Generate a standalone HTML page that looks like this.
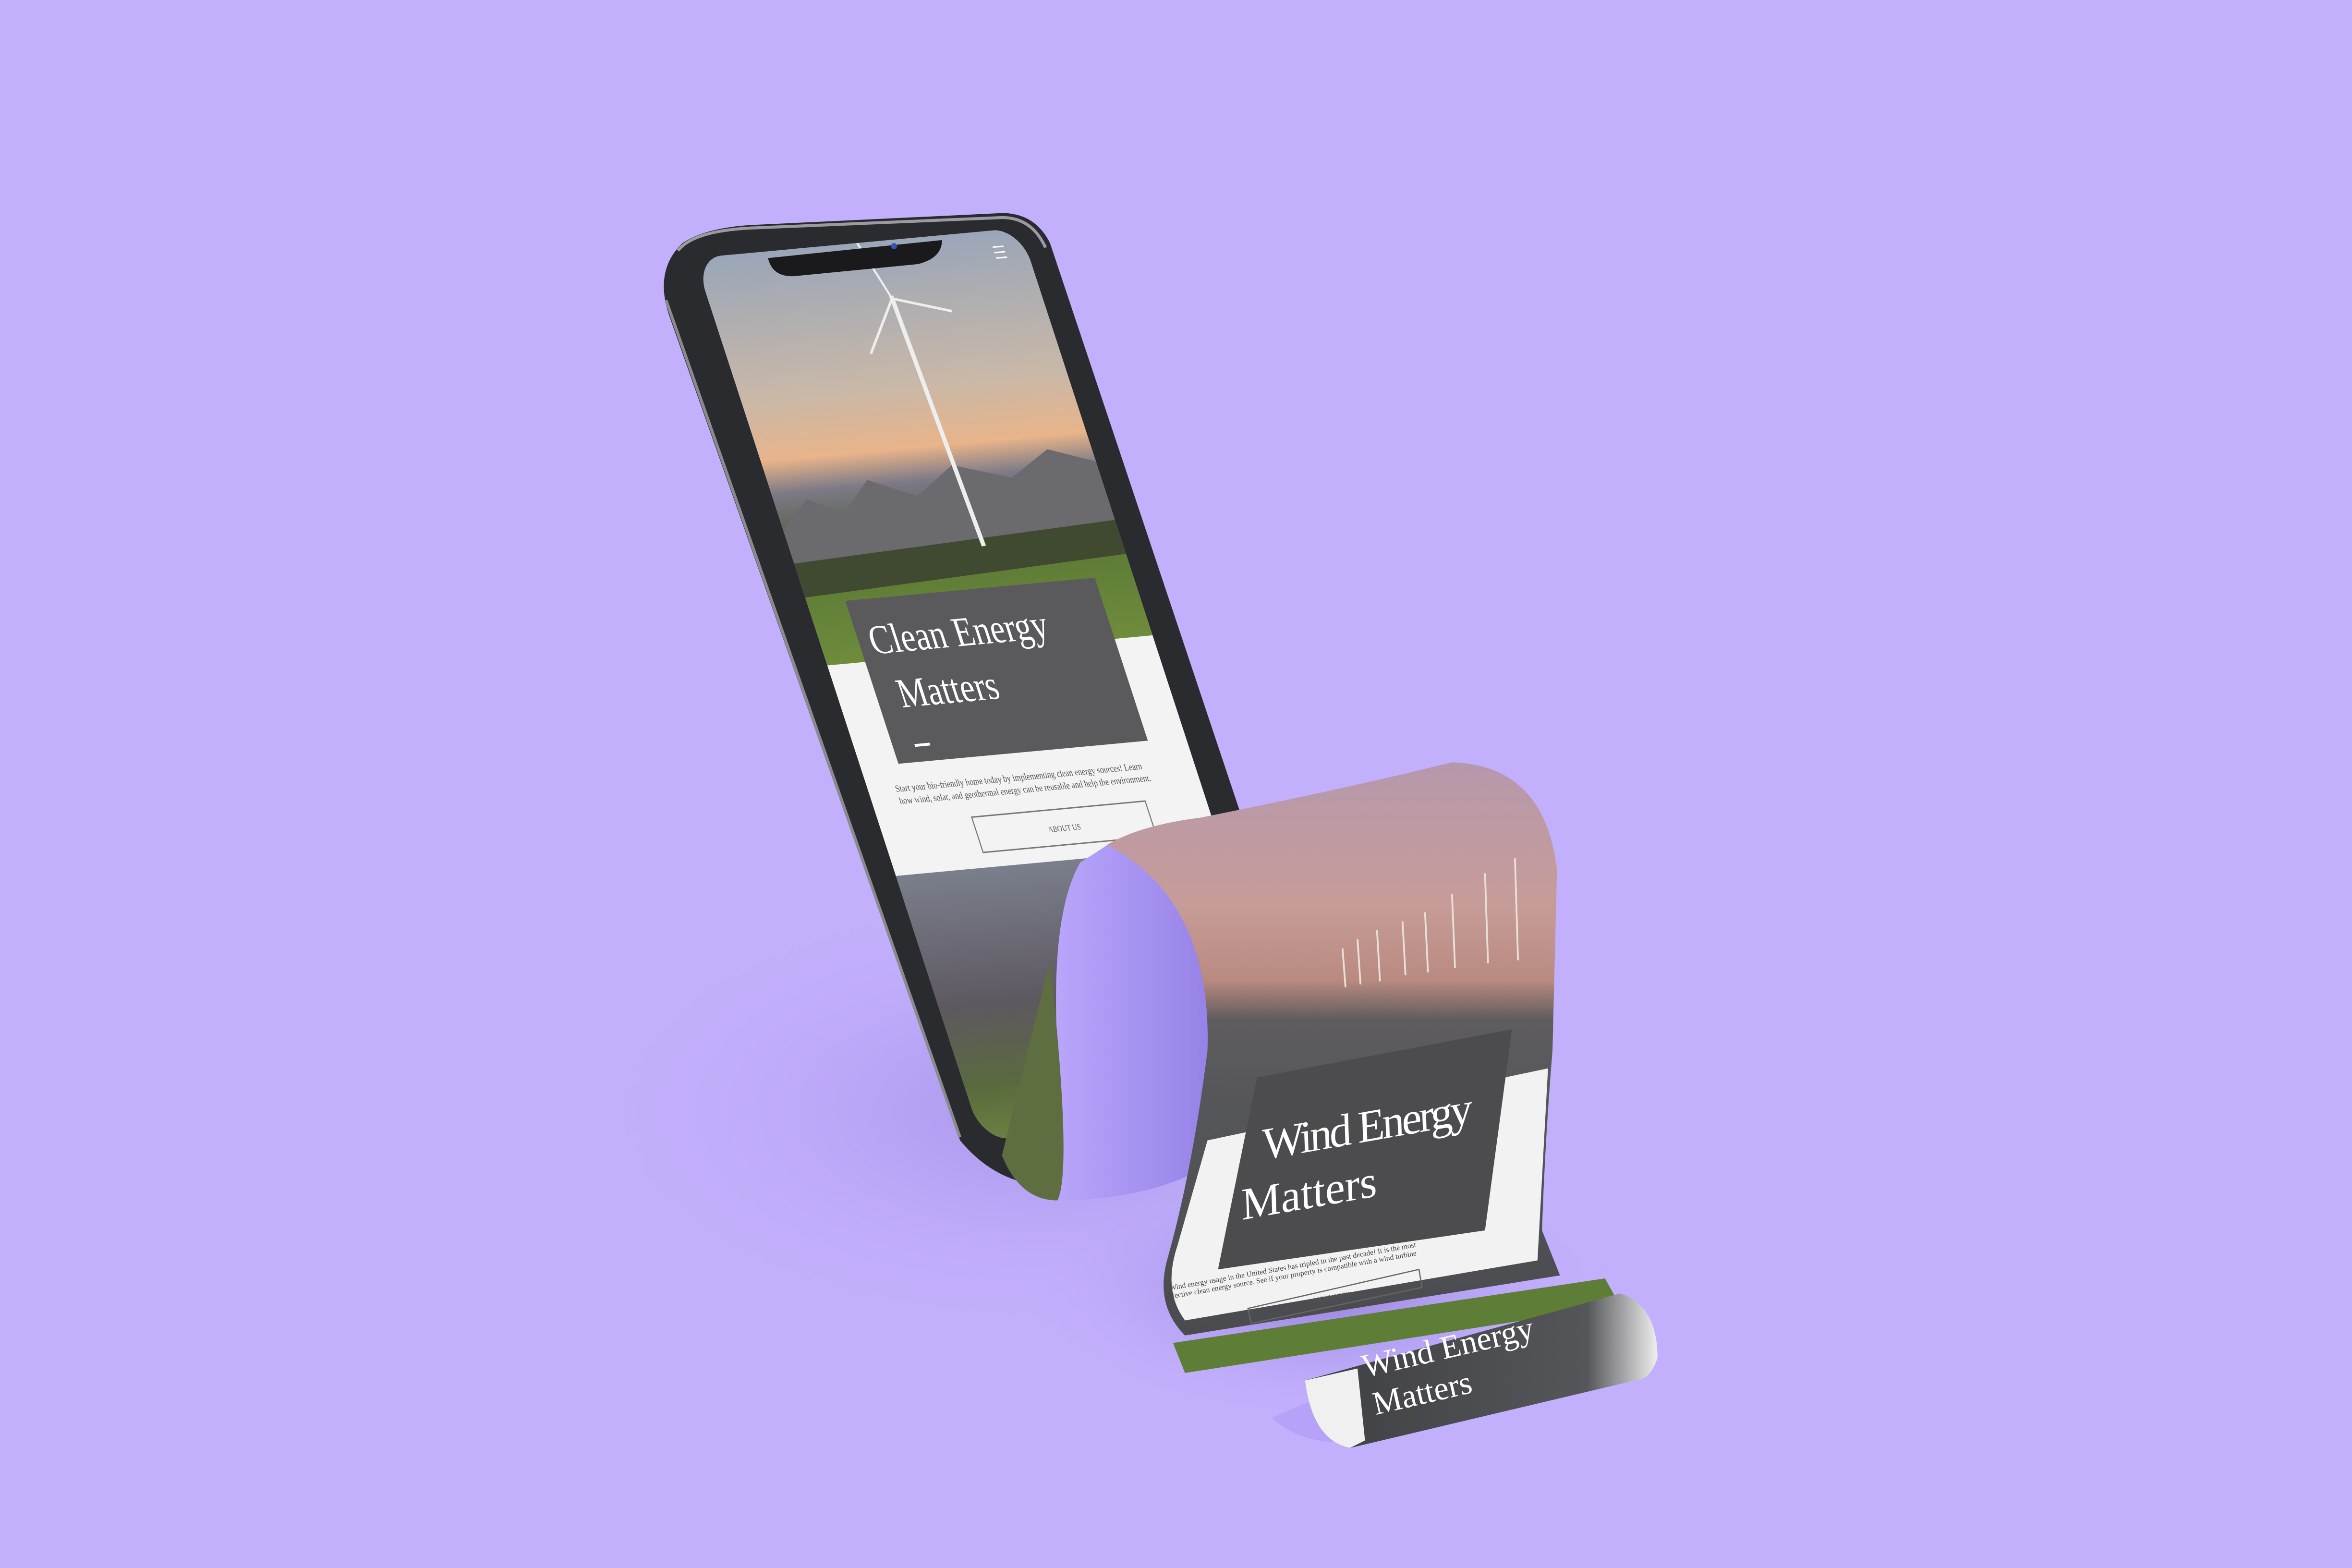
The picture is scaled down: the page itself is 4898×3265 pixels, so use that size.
<!DOCTYPE html>
<html><head><meta charset="utf-8"><style>
html,body{margin:0;padding:0;background:#c3b0fd;}
svg{display:block}
</style></head><body>
<svg width="4898" height="3265" viewBox="0 0 1568 1045" preserveAspectRatio="none" xmlns="http://www.w3.org/2000/svg" font-family="Liberation Serif, serif">
<defs>
<radialGradient id="bgsh" cx="0.5" cy="0.5" r="0.5">
<stop offset="0" stop-color="#7d68c8" stop-opacity="0.75"/><stop offset="1" stop-color="#c3b0fd" stop-opacity="0"/></radialGradient>
<linearGradient id="sky" x1="0" y1="0" x2="0" y2="1">
<stop offset="0" stop-color="#9aa6b8"/><stop offset="0.35" stop-color="#c9b8a8"/><stop offset="0.5" stop-color="#e8b48a"/><stop offset="0.58" stop-color="#7c7a86"/><stop offset="0.72" stop-color="#4f5a3e"/><stop offset="0.8" stop-color="#5f7c38"/><stop offset="1" stop-color="#6e8c3a"/></linearGradient>
<linearGradient id="trees" x1="0" y1="0" x2="0" y2="1">
<stop offset="0" stop-color="#7a7f8c"/><stop offset="0.5" stop-color="#5e5860"/><stop offset="0.8" stop-color="#5a6a3e"/><stop offset="1" stop-color="#6a8040"/></linearGradient>
<linearGradient id="paper" x1="0" y1="0" x2="0" y2="1">
<stop offset="0" stop-color="#b698ac"/><stop offset="0.25" stop-color="#c79c98"/><stop offset="0.38" stop-color="#b98a80"/><stop offset="0.45" stop-color="#5f5c5e"/><stop offset="0.6" stop-color="#55565a"/><stop offset="1" stop-color="#4a4b4e"/></linearGradient>
<linearGradient id="curlin" x1="0" y1="0" x2="1" y2="0">
<stop offset="0" stop-color="#b9a6fb"/><stop offset="1" stop-color="#9581e6"/></linearGradient>
<linearGradient id="roll" x1="0" y1="0" x2="1" y2="0">
<stop offset="0" stop-color="#3e3f42"/><stop offset="0.8" stop-color="#555659"/><stop offset="1" stop-color="#eeeeee"/></linearGradient>
</defs>
<rect width="1568" height="1045" fill="#c3b0fd"/>
<ellipse cx="700" cy="740" rx="330" ry="160" fill="url(#bgsh)" opacity="0.5"/>
<ellipse cx="880" cy="860" rx="200" ry="90" fill="url(#bgsh)" opacity="0.9"/>

<!-- phone body -->
<path d="M455,162 Q470,152 500,150 L668,142 Q690,142 700,162 L828,545 L720,600 L700,790 Q665,790 640,760 L446,210 Q436,180 455,162 Z" fill="#2a2b2e"/>
<path d="M452,167 Q462,154 500,152 L668,145 Q688,145 697,165" fill="none" stroke="#9a9aa0" stroke-width="2"/>
<path d="M444,200 L640,758" stroke="#8a8a90" stroke-width="2" fill="none"/>

<!-- screen -->
<g transform="matrix(0.723,-0.067,0.295,0.905,463,172)">
<clipPath id="sc"><rect x="0" y="0" width="300" height="650" rx="25"/></clipPath>
<g clip-path="url(#sc)">
<rect x="0" y="0" width="300" height="650" fill="#f3f3f3"/>
<rect x="0" y="0" width="300" height="300" fill="url(#sky)"/>
<path d="M0,200 L30,180 L60,192 L90,170 L130,185 L170,165 L220,178 L260,160 L300,172 L300,220 L0,230Z" fill="#6b6a6e"/>
<path d="M0,225 L300,215 L300,240 L0,250Z" fill="#3f4a30"/>
<line x1="165" y1="40" x2="175" y2="225" stroke="#eee" stroke-width="4"/>
<line x1="165" y1="42" x2="150" y2="0" stroke="#eee" stroke-width="2"/>
<line x1="165" y1="42" x2="215" y2="55" stroke="#eee" stroke-width="2"/>
<line x1="165" y1="42" x2="130" y2="80" stroke="#eee" stroke-width="2"/>
<rect x="0" y="455" width="300" height="195" fill="url(#trees)"/>
<rect x="35" y="255" width="230" height="120" fill="#5a5a5c"/>
<text x="45" y="295" font-size="30" fill="#fff">Clean Energy</text>
<text x="55" y="335" font-size="30" fill="#fff">Matters</text>
<rect x="55" y="362" width="14" height="2" fill="#fff"/>
<text x="25" y="395" font-size="7" fill="#555">Start your bio-friendly home today by implementing clean energy sources! Learn</text>
<text x="25" y="404" font-size="7" fill="#555">how wind, solar, and geothermal energy can be reusable and help the environment.</text>
<rect x="85" y="418" width="160" height="26" fill="none" stroke="#777" stroke-width="1"/>
<text x="150" y="434" font-size="6" fill="#555">ABOUT US</text>
<path d="M270,12 h10 M270,16 h10 M270,20 h10" stroke="#fff" stroke-width="1"/>
</g>
</g>
<!-- notch -->
<path d="M512,172 L628,160 Q628,172 612,176 L530,184 Q515,185 512,172Z" fill="#1a1a1c"/>
<circle cx="596" cy="164" r="2" fill="#3355aa"/>

<!-- curl inside -->
<path d="M720,575 Q700,610 705,700 Q712,790 705,800 Q760,800 800,780 L810,640 Q800,580 740,562 Z" fill="url(#curlin)"/>
<path d="M705,800 Q680,800 668,770 L700,640 Q715,780 705,800Z" fill="#5f6e40"/>

<!-- main paper -->
<path d="M738,563 Q760,550 800,545 Q900,525 968,508 Q1030,510 1038,580 L1035,700 Q1030,760 1028,820 L1040,850 L790,890 Q770,870 778,840 Q795,780 805,700 Q808,600 738,563 Z" fill="url(#paper)"/>
<path d="M805,760 L1032,712 L1025,840 L790,880 Q775,860 785,830Z" fill="#f2f2f2"/>
<path d="M838,718 L1008,686 L990,820 L812,846Z" fill="#4c4c4f"/>
<g stroke="#e8e0d8" stroke-width="1.2">
<line x1="1010" y1="572" x2="1012" y2="640"/><line x1="990" y1="582" x2="992" y2="642"/><line x1="968" y1="596" x2="970" y2="645"/><line x1="950" y1="608" x2="952" y2="648"/><line x1="935" y1="614" x2="937" y2="650"/><line x1="918" y1="620" x2="920" y2="654"/><line x1="905" y1="626" x2="907" y2="656"/><line x1="895" y1="632" x2="897" y2="658"/>
</g>
<text transform="translate(842,773) rotate(-10) skewX(-8)" font-size="30" fill="#fff" textLength="142">Wind Energy</text>
<text transform="translate(828,813) rotate(-10) skewX(-8)" font-size="30" fill="#fff">Matters</text>
<text transform="translate(780,860) rotate(-10)" font-size="5" fill="#444">Wind energy usage in the United States has tripled in the past decade! It is the most</text>
<text transform="translate(778,866) rotate(-10)" font-size="5" fill="#444">effective clean energy source. See if your property is compatible with a wind turbine</text>
<path d="M832,872 L946,846 L948,858 L834,882Z" fill="none" stroke="#666" stroke-width="0.8"/>
<text transform="translate(876,868) rotate(-10)" font-size="4.5" fill="#555">MORE INFO</text>
<path d="M782,895 L1070,852 L1080,870 L790,915Z" fill="#5e7e38"/>

<!-- lower roll -->
<path d="M848,945 Q880,930 900,925 L905,960 Q870,965 848,945Z" fill="#b6a2f8"/>
<path d="M870,920 L1080,862 Q1105,870 1105,905 Q1100,920 1090,920 L900,965 Q875,960 870,920Z" fill="url(#roll)"/>
<path d="M870,920 L905,912 L910,960 L900,965 Q875,960 870,920Z" fill="#f0f0f0"/>
<text transform="translate(910,918) rotate(-13)" font-size="22" fill="#fff">Wind Energy</text>
<text transform="translate(917,943) rotate(-13)" font-size="22" fill="#fff">Matters</text>
</svg>
</body></html>
